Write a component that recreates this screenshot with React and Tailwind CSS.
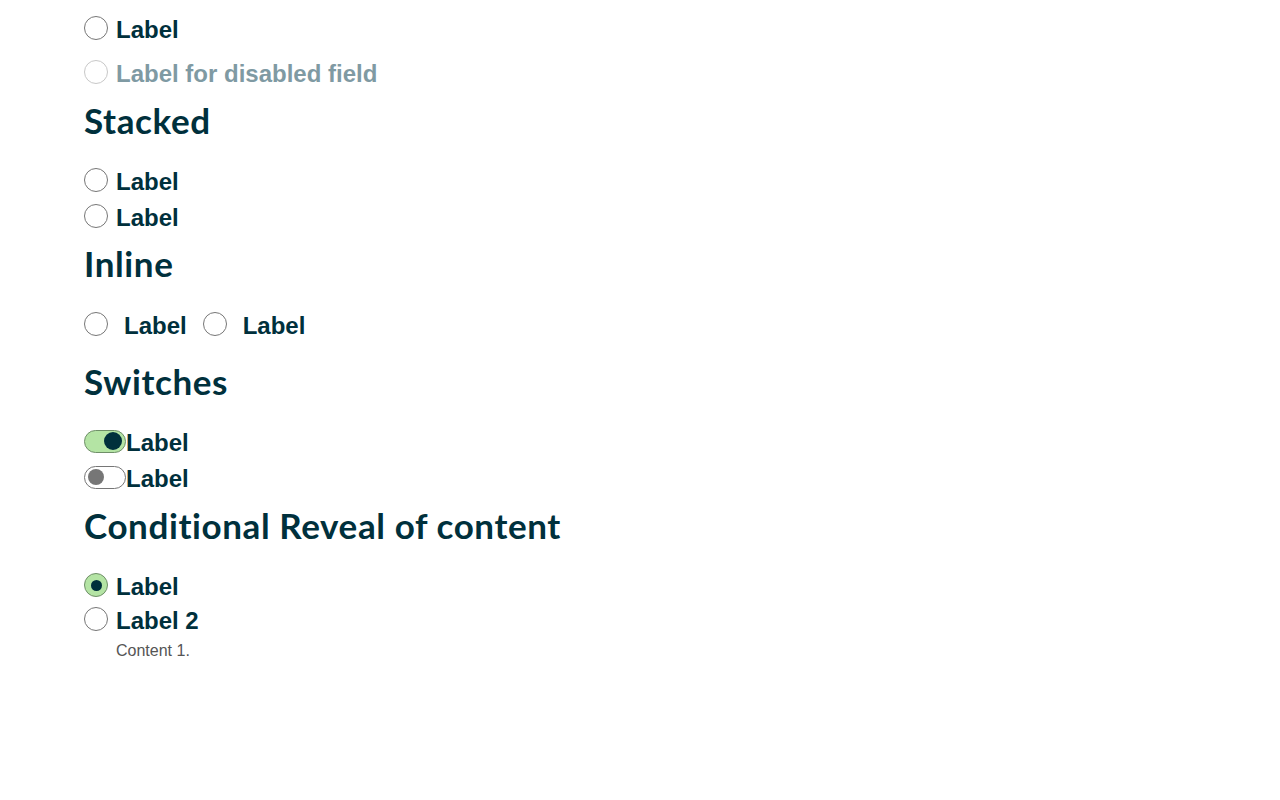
import React from "react";

const ink = "text-[#00303c]";

const Radio = ({ checked = false, disabled = false }) => (
  <span
    className={`flex h-6 w-6 shrink-0 items-center justify-center rounded-full border ${
      checked
        ? "border-[#6f8f68] bg-[#b4e4a4]"
        : disabled
        ? "border-[#c8c8c8] bg-white"
        : "border-[#767676] bg-white"
    }`}
  >
    {checked && <span className="h-[11px] w-[11px] rounded-full bg-[#00303c]" />}
  </span>
);

const Switch = ({ on }) => (
  <span
    className={`flex h-[23px] w-[42px] shrink-0 items-center rounded-full border px-[3px] ${
      on ? "justify-end border-[#6f8f68] bg-[#b4e4a4]" : "justify-start border-[#767676] bg-white"
    }`}
  >
    <span className={`rounded-full ${on ? "h-[18px] w-[18px] bg-[#00303c]" : "h-4 w-4 bg-[#767676]"}`} />
  </span>
);

const Heading = ({ children, className = "" }) => (
  <h2
    className={`flex h-10 items-center font-['Lato',sans-serif] text-[35px] font-bold leading-none tracking-[0.6px] ${ink} ${className}`}
  >
    {children}
  </h2>
);

const Row = ({ children, gap = "gap-2", className = "" }) => (
  <label className={`flex h-9 items-center text-2xl leading-6 font-bold ${gap} ${ink} ${className}`}>{children}</label>
);

const Text = ({ children, className = "" }) => <span className={`pt-1 ${className}`}>{children}</span>;

export default function App() {
  return (
    <div className="min-h-screen bg-white pl-[84px] pt-[10px] font-['Liberation_Sans',Arial,sans-serif]">
      <Row>
        <Radio />
        <Text>Label</Text>
      </Row>
      <Row className="mt-2">
        <Radio disabled />
        <Text className="text-[#7f9aa3]">Label for disabled field</Text>
      </Row>

      <Heading className="mt-[10px]">Stacked</Heading>
      <div className="mt-[22px]">
        <Row>
          <Radio />
          <Text>Label</Text>
        </Row>
        <Row>
          <Radio />
          <Text>Label</Text>
        </Row>
      </div>

      <Heading className="mt-[9px]">Inline</Heading>
      <div className="mt-[23px] flex items-center">
        <Row gap="gap-4">
          <Radio />
          <Text>Label</Text>
        </Row>
        <Row gap="gap-4" className="ml-[16px]">
          <Radio />
          <Text>Label</Text>
        </Row>
      </div>

      <Heading className="mt-[19px]">Switches</Heading>
      <div className="mt-[22px]">
        <Row gap="gap-0">
          <Switch on />
          <Text>Label</Text>
        </Row>
        <Row gap="gap-0">
          <Switch on={false} />
          <Text>Label</Text>
        </Row>
      </div>

      <Heading className="mt-[10px]">Conditional Reveal of content</Heading>
      <div className="mt-[23px]">
        <Row className="h-[34px]">
          <Radio checked />
          <Text>Label</Text>
        </Row>
        <Row className="h-[34px]">
          <Radio />
          <Text>Label 2</Text>
        </Row>
        <p className="mt-[5px] pl-8 text-base leading-5 text-[#555555]">Content 1.</p>
      </div>
    </div>
  );
}
